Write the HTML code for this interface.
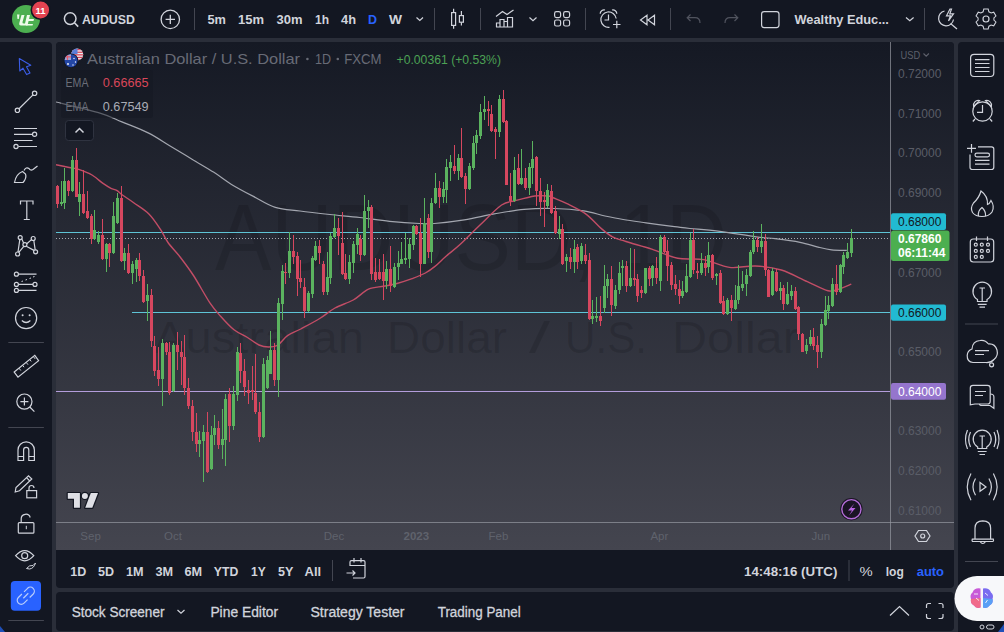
<!DOCTYPE html>
<html><head><meta charset="utf-8">
<style>
html,body{margin:0;padding:0;width:1004px;height:632px;overflow:hidden;background:#2a2e39;font-family:"Liberation Sans",sans-serif;}
.abs{position:absolute;}
.panel{position:absolute;background:#131722;border-radius:4px;}
svg{position:absolute;left:0;top:0;}
text{font-family:"Liberation Sans",sans-serif;}
</style></head><body>
<!-- top bar -->
<div class="abs" style="left:0;top:0;width:1004px;height:38px;background:#131722;"></div>
<!-- left toolbar -->
<div class="panel" style="left:0;top:42px;width:52px;height:600px;border-radius:0 4px 0 0;"></div>
<!-- right toolbar -->
<div class="panel" style="left:958px;top:42px;width:46px;height:600px;border-radius:4px 0 0 0;"></div>
<!-- chart panel -->
<div class="panel" style="left:56px;top:42px;width:898px;height:546px;overflow:hidden;">
  <div class="abs" style="left:0;top:0;width:898px;height:508px;background:linear-gradient(#151924,#44454f);"></div>
</div>
<!-- bottom panel -->
<div class="panel" style="left:56px;top:592px;width:898px;height:39px;"></div>

<svg width="1004" height="632" viewBox="0 0 1004 632">
  <defs>
    <clipPath id="cc"><rect x="56" y="42" width="834" height="480"/></clipPath>
  </defs>
  <!-- watermark -->
  <g clip-path="url(#cc)">
    <text x="215" y="269.5" font-size="94" fill="#000" fill-opacity="0.13" textLength="512" lengthAdjust="spacingAndGlyphs">AUDUSD, 1D</text>
    <g font-size="44.6" fill="#000" fill-opacity="0.13">
      <text x="154" y="353" textLength="210" lengthAdjust="spacingAndGlyphs">Australian</text>
      <text x="387" y="353" textLength="120" lengthAdjust="spacingAndGlyphs">Dollar</text>
      <text x="529" y="353" textLength="21" lengthAdjust="spacingAndGlyphs">/</text>
      <text x="565" y="353" textLength="82" lengthAdjust="spacingAndGlyphs">U.S.</text>
      <text x="672" y="353" textLength="127" lengthAdjust="spacingAndGlyphs">Dollar</text>
    </g>
    <!-- horizontal lines -->
    <rect x="56" y="232" width="834" height="1" fill="#5ec4d6"/>
    <line x1="56" y1="238.5" x2="890" y2="238.5" stroke="#a7aab2" stroke-width="1" stroke-dasharray="1,2"/>
    <rect x="132" y="312" width="758" height="1" fill="#5ec4d6"/>
    <rect x="56" y="391" width="834" height="1" fill="#b39ddb"/>
    <path d="M56.0 102.0 C63.3 103.8 89.0 109.8 100.0 113.1 C111.0 116.4 113.9 118.6 121.9 121.9 C129.9 125.2 140.2 128.9 148.2 132.9 C156.2 136.9 162.8 141.6 170.1 146.0 C177.4 150.4 184.7 154.8 192.0 159.2 C199.3 163.6 207.3 168.1 213.9 172.3 C220.5 176.5 224.9 180.4 231.5 184.4 C238.1 188.4 246.1 192.6 253.4 196.4 C260.7 200.2 267.5 205.0 275.3 207.4 C283.1 209.8 290.9 209.8 300.0 211.0 C309.1 212.2 319.9 213.4 329.9 214.5 C339.9 215.6 349.9 216.3 359.8 217.5 C369.8 218.7 379.7 220.4 389.6 221.4 C399.6 222.4 412.0 223.2 419.5 223.5 C427.0 223.8 426.9 224.1 434.4 223.5 C441.9 222.9 454.3 221.5 464.3 219.9 C474.3 218.3 484.2 215.7 494.2 213.9 C504.2 212.2 514.1 210.3 524.1 209.4 C534.1 208.5 544.0 208.2 554.0 208.5 C564.0 208.8 575.3 209.7 583.8 210.9 C592.3 212.2 598.4 214.6 605.0 216.0 C611.6 217.4 616.4 218.4 623.2 219.5 C630.0 220.6 637.5 221.6 646.0 222.8 C654.5 224.0 667.1 225.7 674.4 226.6 C681.7 227.5 682.7 227.8 690.0 228.5 C697.3 229.2 707.0 229.7 718.0 231.1 C729.0 232.5 746.5 235.5 756.0 236.8 C765.5 238.1 767.7 237.8 775.0 238.7 C782.3 239.6 792.7 240.9 800.0 242.3 C807.3 243.7 813.7 246.1 819.0 247.3 C824.3 248.6 827.0 249.3 831.6 249.8 C836.2 250.3 844.3 250.3 846.8 250.4" fill="none" stroke="#a3a6af" stroke-width="1.2"/>
    <path d="M56.0 164.7 C58.2 165.2 65.4 166.7 69.2 167.5 C73.0 168.3 74.9 168.2 78.7 169.4 C82.5 170.7 87.9 172.6 92.0 175.0 C96.1 177.4 100.2 181.5 103.4 183.7 C106.6 185.9 108.8 187.3 111.0 188.4 C113.2 189.5 114.8 189.2 116.7 190.3 C118.6 191.4 119.6 192.9 122.4 195.0 C125.2 197.1 129.3 199.5 133.7 202.7 C138.1 205.9 144.5 209.6 148.9 214.0 C153.3 218.4 157.1 224.4 160.3 229.2 C163.5 233.9 164.7 237.8 168.0 242.5 C171.3 247.2 176.0 251.6 180.3 257.2 C184.6 262.8 188.9 268.4 193.8 276.0 C198.7 283.6 205.4 296.2 209.9 302.9 C214.4 309.6 216.6 311.8 220.6 316.3 C224.6 320.8 229.5 326.3 234.0 329.8 C238.5 333.3 243.3 335.0 247.5 337.5 C251.7 340.0 255.5 343.4 259.0 345.0 C262.5 346.6 265.3 347.0 268.5 347.0 C271.7 347.0 274.8 346.9 278.0 345.0 C281.2 343.1 283.7 338.3 287.5 335.6 C291.3 332.9 295.4 331.9 300.8 329.0 C306.2 326.1 314.0 322.0 319.7 318.5 C325.4 315.0 329.4 311.1 335.0 308.0 C340.6 304.9 347.7 303.1 353.3 300.0 C358.9 296.9 363.4 291.5 368.5 289.2 C373.6 286.9 378.9 287.2 383.7 286.3 C388.4 285.4 392.3 284.8 397.0 283.5 C401.7 282.2 407.4 280.4 412.1 278.7 C416.8 276.9 421.6 275.1 425.4 273.0 C429.2 270.9 431.5 269.2 435.0 266.4 C438.5 263.6 442.1 259.6 446.3 256.0 C450.5 252.4 454.4 249.8 460.0 244.6 C465.6 239.4 473.1 231.6 480.0 225.0 C486.9 218.4 495.8 209.0 501.6 205.0 C507.4 201.0 509.5 202.3 515.0 200.8 C520.5 199.3 529.2 196.8 534.7 196.0 C540.2 195.2 544.8 195.7 548.0 196.0 C551.2 196.3 550.5 196.7 553.7 198.0 C556.9 199.3 561.6 201.0 567.0 203.7 C572.4 206.4 580.3 210.0 586.0 214.1 C591.7 218.2 596.7 224.6 601.1 228.4 C605.5 232.2 608.4 234.7 612.5 236.9 C616.6 239.1 619.4 239.4 625.9 241.5 C632.4 243.6 643.2 246.4 651.8 249.2 C660.4 252.0 669.1 256.6 677.7 258.3 C686.3 260.0 695.0 258.1 703.6 259.6 C712.2 261.1 720.9 266.3 729.5 267.4 C738.1 268.5 746.8 265.6 755.4 266.0 C764.0 266.4 772.6 267.4 781.3 270.0 C789.9 272.6 799.5 278.2 807.3 281.6 C815.1 285.1 822.8 289.4 828.0 290.7 C833.2 292.0 834.4 290.5 838.3 289.4 C842.2 288.3 849.1 285.1 851.3 284.2" fill="none" stroke="#c24d66" stroke-width="1.4"/>
    <rect x="57" y="185" width="1" height="23" fill="#d6475f"/><rect x="56" y="186" width="3" height="18" fill="#d6475f"/><rect x="61" y="181" width="1" height="25" fill="#5bb35f"/><rect x="60" y="202" width="3" height="2" fill="#5bb35f"/><rect x="64" y="168" width="1" height="41" fill="#5bb35f"/><rect x="63" y="181" width="3" height="22" fill="#5bb35f"/><rect x="68" y="180" width="1" height="16" fill="#d6475f"/><rect x="67" y="181" width="3" height="10" fill="#d6475f"/><rect x="72" y="156" width="1" height="36" fill="#5bb35f"/><rect x="71" y="160" width="3" height="31" fill="#5bb35f"/><rect x="76" y="148" width="1" height="49" fill="#d6475f"/><rect x="75" y="160" width="3" height="37" fill="#d6475f"/><rect x="79" y="182" width="1" height="34" fill="#5bb35f"/><rect x="78" y="194" width="3" height="8" fill="#5bb35f"/><rect x="83" y="170" width="1" height="44" fill="#d6475f"/><rect x="82" y="194" width="3" height="19" fill="#d6475f"/><rect x="87" y="191" width="1" height="28" fill="#d6475f"/><rect x="86" y="211" width="3" height="7" fill="#d6475f"/><rect x="91" y="214" width="1" height="30" fill="#d6475f"/><rect x="90" y="216" width="3" height="23" fill="#d6475f"/><rect x="94" y="210" width="1" height="30" fill="#5bb35f"/><rect x="93" y="230" width="3" height="9" fill="#5bb35f"/><rect x="98" y="231" width="1" height="13" fill="#5bb35f"/><rect x="97" y="235" width="3" height="7" fill="#5bb35f"/><rect x="102" y="219" width="1" height="41" fill="#d6475f"/><rect x="101" y="235" width="3" height="24" fill="#d6475f"/><rect x="106" y="243" width="1" height="29" fill="#5bb35f"/><rect x="105" y="244" width="3" height="15" fill="#5bb35f"/><rect x="109" y="243" width="1" height="24" fill="#d6475f"/><rect x="108" y="244" width="3" height="9" fill="#d6475f"/><rect x="113" y="202" width="1" height="52" fill="#5bb35f"/><rect x="112" y="216" width="3" height="37" fill="#5bb35f"/><rect x="117" y="193" width="1" height="31" fill="#5bb35f"/><rect x="116" y="198" width="3" height="25" fill="#5bb35f"/><rect x="121" y="186" width="1" height="76" fill="#d6475f"/><rect x="120" y="198" width="3" height="63" fill="#d6475f"/><rect x="124" y="248" width="1" height="22" fill="#5bb35f"/><rect x="123" y="253" width="3" height="8" fill="#5bb35f"/><rect x="128" y="244" width="1" height="30" fill="#d6475f"/><rect x="127" y="253" width="3" height="20" fill="#d6475f"/><rect x="132" y="261" width="1" height="23" fill="#5bb35f"/><rect x="131" y="264" width="3" height="9" fill="#5bb35f"/><rect x="136" y="258" width="1" height="24" fill="#5bb35f"/><rect x="135" y="260" width="3" height="9" fill="#5bb35f"/><rect x="139" y="253" width="1" height="28" fill="#d6475f"/><rect x="138" y="260" width="3" height="16" fill="#d6475f"/><rect x="143" y="270" width="1" height="33" fill="#d6475f"/><rect x="142" y="276" width="3" height="26" fill="#d6475f"/><rect x="147" y="284" width="1" height="37" fill="#5bb35f"/><rect x="146" y="295" width="3" height="6" fill="#5bb35f"/><rect x="151" y="289" width="1" height="58" fill="#d6475f"/><rect x="150" y="295" width="3" height="46" fill="#d6475f"/><rect x="154" y="336" width="1" height="40" fill="#d6475f"/><rect x="153" y="346" width="3" height="25" fill="#d6475f"/><rect x="158" y="347" width="1" height="39" fill="#d6475f"/><rect x="157" y="370" width="3" height="9" fill="#d6475f"/><rect x="162" y="339" width="1" height="67" fill="#5bb35f"/><rect x="161" y="343" width="3" height="36" fill="#5bb35f"/><rect x="166" y="342" width="1" height="13" fill="#d6475f"/><rect x="165" y="343" width="3" height="9" fill="#d6475f"/><rect x="169" y="342" width="1" height="53" fill="#d6475f"/><rect x="168" y="352" width="3" height="41" fill="#d6475f"/><rect x="173" y="343" width="1" height="49" fill="#5bb35f"/><rect x="172" y="345" width="3" height="46" fill="#5bb35f"/><rect x="177" y="332" width="1" height="38" fill="#d6475f"/><rect x="176" y="345" width="3" height="7" fill="#d6475f"/><rect x="181" y="341" width="1" height="44" fill="#d6475f"/><rect x="180" y="352" width="3" height="5" fill="#d6475f"/><rect x="184" y="335" width="1" height="60" fill="#d6475f"/><rect x="183" y="357" width="3" height="31" fill="#d6475f"/><rect x="188" y="378" width="1" height="31" fill="#d6475f"/><rect x="187" y="388" width="3" height="18" fill="#d6475f"/><rect x="192" y="400" width="1" height="41" fill="#d6475f"/><rect x="191" y="406" width="3" height="26" fill="#d6475f"/><rect x="196" y="413" width="1" height="39" fill="#d6475f"/><rect x="195" y="432" width="3" height="12" fill="#d6475f"/><rect x="199" y="431" width="1" height="26" fill="#5bb35f"/><rect x="198" y="440" width="3" height="4" fill="#5bb35f"/><rect x="203" y="425" width="1" height="57" fill="#5bb35f"/><rect x="202" y="432" width="3" height="9" fill="#5bb35f"/><rect x="207" y="412" width="1" height="61" fill="#d6475f"/><rect x="206" y="432" width="3" height="40" fill="#d6475f"/><rect x="211" y="426" width="1" height="44" fill="#5bb35f"/><rect x="210" y="435" width="3" height="34" fill="#5bb35f"/><rect x="214" y="415" width="1" height="30" fill="#5bb35f"/><rect x="213" y="428" width="3" height="7" fill="#5bb35f"/><rect x="218" y="421" width="1" height="28" fill="#d6475f"/><rect x="217" y="428" width="3" height="17" fill="#d6475f"/><rect x="222" y="409" width="1" height="50" fill="#5bb35f"/><rect x="221" y="439" width="3" height="6" fill="#5bb35f"/><rect x="225" y="394" width="1" height="72" fill="#5bb35f"/><rect x="224" y="399" width="3" height="41" fill="#5bb35f"/><rect x="229" y="388" width="1" height="54" fill="#d6475f"/><rect x="228" y="394" width="3" height="32" fill="#d6475f"/><rect x="233" y="386" width="1" height="44" fill="#5bb35f"/><rect x="232" y="394" width="3" height="32" fill="#5bb35f"/><rect x="237" y="347" width="1" height="54" fill="#5bb35f"/><rect x="236" y="352" width="3" height="43" fill="#5bb35f"/><rect x="240" y="343" width="1" height="40" fill="#d6475f"/><rect x="239" y="353" width="3" height="18" fill="#d6475f"/><rect x="244" y="359" width="1" height="37" fill="#d6475f"/><rect x="243" y="371" width="3" height="16" fill="#d6475f"/><rect x="248" y="380" width="1" height="24" fill="#d6475f"/><rect x="247" y="390" width="3" height="3" fill="#d6475f"/><rect x="252" y="366" width="1" height="34" fill="#d6475f"/><rect x="251" y="390" width="3" height="2" fill="#d6475f"/><rect x="255" y="354" width="1" height="60" fill="#d6475f"/><rect x="254" y="393" width="3" height="19" fill="#d6475f"/><rect x="259" y="402" width="1" height="40" fill="#d6475f"/><rect x="258" y="412" width="3" height="25" fill="#d6475f"/><rect x="263" y="358" width="1" height="80" fill="#5bb35f"/><rect x="262" y="364" width="3" height="73" fill="#5bb35f"/><rect x="267" y="356" width="1" height="33" fill="#5bb35f"/><rect x="266" y="360" width="3" height="28" fill="#5bb35f"/><rect x="270" y="331" width="1" height="43" fill="#5bb35f"/><rect x="269" y="350" width="3" height="24" fill="#5bb35f"/><rect x="274" y="343" width="1" height="43" fill="#d6475f"/><rect x="273" y="350" width="3" height="30" fill="#d6475f"/><rect x="278" y="298" width="1" height="99" fill="#5bb35f"/><rect x="277" y="303" width="3" height="77" fill="#5bb35f"/><rect x="282" y="265" width="1" height="55" fill="#5bb35f"/><rect x="281" y="271" width="3" height="33" fill="#5bb35f"/><rect x="285" y="263" width="1" height="21" fill="#d6475f"/><rect x="284" y="272" width="3" height="1" fill="#d6475f"/><rect x="289" y="232" width="1" height="46" fill="#5bb35f"/><rect x="288" y="251" width="3" height="22" fill="#5bb35f"/><rect x="293" y="235" width="1" height="29" fill="#d6475f"/><rect x="292" y="251" width="3" height="6" fill="#d6475f"/><rect x="297" y="252" width="1" height="44" fill="#d6475f"/><rect x="296" y="256" width="3" height="23" fill="#d6475f"/><rect x="300" y="260" width="1" height="28" fill="#d6475f"/><rect x="299" y="278" width="3" height="4" fill="#d6475f"/><rect x="304" y="278" width="1" height="40" fill="#d6475f"/><rect x="303" y="287" width="3" height="24" fill="#d6475f"/><rect x="308" y="291" width="1" height="21" fill="#5bb35f"/><rect x="307" y="293" width="3" height="18" fill="#5bb35f"/><rect x="312" y="256" width="1" height="42" fill="#5bb35f"/><rect x="311" y="258" width="3" height="36" fill="#5bb35f"/><rect x="315" y="241" width="1" height="20" fill="#5bb35f"/><rect x="314" y="246" width="3" height="14" fill="#5bb35f"/><rect x="319" y="240" width="1" height="24" fill="#d6475f"/><rect x="318" y="246" width="3" height="7" fill="#d6475f"/><rect x="323" y="261" width="1" height="34" fill="#d6475f"/><rect x="322" y="264" width="3" height="28" fill="#d6475f"/><rect x="327" y="252" width="1" height="43" fill="#5bb35f"/><rect x="326" y="277" width="3" height="15" fill="#5bb35f"/><rect x="330" y="233" width="1" height="51" fill="#5bb35f"/><rect x="329" y="236" width="3" height="42" fill="#5bb35f"/><rect x="334" y="214" width="1" height="24" fill="#5bb35f"/><rect x="333" y="228" width="3" height="9" fill="#5bb35f"/><rect x="338" y="218" width="1" height="37" fill="#d6475f"/><rect x="337" y="228" width="3" height="8" fill="#d6475f"/><rect x="342" y="212" width="1" height="63" fill="#d6475f"/><rect x="341" y="243" width="3" height="31" fill="#d6475f"/><rect x="345" y="254" width="1" height="26" fill="#d6475f"/><rect x="344" y="273" width="3" height="6" fill="#d6475f"/><rect x="349" y="255" width="1" height="29" fill="#5bb35f"/><rect x="348" y="262" width="3" height="17" fill="#5bb35f"/><rect x="353" y="241" width="1" height="32" fill="#5bb35f"/><rect x="352" y="244" width="3" height="19" fill="#5bb35f"/><rect x="357" y="228" width="1" height="26" fill="#5bb35f"/><rect x="356" y="234" width="3" height="11" fill="#5bb35f"/><rect x="360" y="235" width="1" height="26" fill="#d6475f"/><rect x="359" y="239" width="3" height="16" fill="#d6475f"/><rect x="364" y="195" width="1" height="61" fill="#5bb35f"/><rect x="363" y="211" width="3" height="44" fill="#5bb35f"/><rect x="368" y="200" width="1" height="28" fill="#5bb35f"/><rect x="367" y="207" width="3" height="4" fill="#5bb35f"/><rect x="371" y="205" width="1" height="75" fill="#d6475f"/><rect x="370" y="207" width="3" height="67" fill="#d6475f"/><rect x="375" y="258" width="1" height="24" fill="#d6475f"/><rect x="374" y="272" width="3" height="8" fill="#d6475f"/><rect x="379" y="259" width="1" height="21" fill="#d6475f"/><rect x="378" y="272" width="3" height="7" fill="#d6475f"/><rect x="383" y="254" width="1" height="46" fill="#d6475f"/><rect x="382" y="272" width="3" height="9" fill="#d6475f"/><rect x="386" y="261" width="1" height="28" fill="#5bb35f"/><rect x="385" y="269" width="3" height="12" fill="#5bb35f"/><rect x="390" y="246" width="1" height="46" fill="#d6475f"/><rect x="389" y="269" width="3" height="17" fill="#d6475f"/><rect x="394" y="263" width="1" height="25" fill="#5bb35f"/><rect x="393" y="267" width="3" height="20" fill="#5bb35f"/><rect x="398" y="251" width="1" height="29" fill="#5bb35f"/><rect x="397" y="263" width="3" height="4" fill="#5bb35f"/><rect x="401" y="242" width="1" height="22" fill="#5bb35f"/><rect x="400" y="259" width="3" height="5" fill="#5bb35f"/><rect x="405" y="233" width="1" height="31" fill="#5bb35f"/><rect x="404" y="258" width="3" height="2" fill="#5bb35f"/><rect x="409" y="238" width="1" height="30" fill="#5bb35f"/><rect x="408" y="244" width="3" height="15" fill="#5bb35f"/><rect x="413" y="225" width="1" height="25" fill="#5bb35f"/><rect x="412" y="226" width="3" height="19" fill="#5bb35f"/><rect x="416" y="225" width="1" height="10" fill="#d6475f"/><rect x="415" y="226" width="3" height="8" fill="#d6475f"/><rect x="420" y="218" width="1" height="59" fill="#d6475f"/><rect x="419" y="233" width="3" height="31" fill="#d6475f"/><rect x="424" y="198" width="1" height="66" fill="#5bb35f"/><rect x="423" y="223" width="3" height="41" fill="#5bb35f"/><rect x="428" y="214" width="1" height="44" fill="#d6475f"/><rect x="427" y="218" width="3" height="34" fill="#d6475f"/><rect x="431" y="198" width="1" height="65" fill="#5bb35f"/><rect x="430" y="203" width="3" height="49" fill="#5bb35f"/><rect x="435" y="173" width="1" height="31" fill="#5bb35f"/><rect x="434" y="188" width="3" height="15" fill="#5bb35f"/><rect x="439" y="181" width="1" height="27" fill="#d6475f"/><rect x="438" y="188" width="3" height="9" fill="#d6475f"/><rect x="443" y="182" width="1" height="21" fill="#5bb35f"/><rect x="442" y="189" width="3" height="8" fill="#5bb35f"/><rect x="446" y="159" width="1" height="44" fill="#5bb35f"/><rect x="445" y="167" width="3" height="23" fill="#5bb35f"/><rect x="450" y="155" width="1" height="26" fill="#5bb35f"/><rect x="449" y="162" width="3" height="6" fill="#5bb35f"/><rect x="454" y="145" width="1" height="29" fill="#d6475f"/><rect x="453" y="166" width="3" height="5" fill="#d6475f"/><rect x="458" y="154" width="1" height="26" fill="#5bb35f"/><rect x="457" y="158" width="3" height="13" fill="#5bb35f"/><rect x="461" y="128" width="1" height="50" fill="#d6475f"/><rect x="460" y="158" width="3" height="19" fill="#d6475f"/><rect x="465" y="173" width="1" height="31" fill="#d6475f"/><rect x="464" y="176" width="3" height="13" fill="#d6475f"/><rect x="469" y="163" width="1" height="27" fill="#5bb35f"/><rect x="468" y="166" width="3" height="23" fill="#5bb35f"/><rect x="473" y="136" width="1" height="34" fill="#5bb35f"/><rect x="472" y="143" width="3" height="25" fill="#5bb35f"/><rect x="476" y="130" width="1" height="24" fill="#5bb35f"/><rect x="475" y="135" width="3" height="8" fill="#5bb35f"/><rect x="480" y="104" width="1" height="35" fill="#5bb35f"/><rect x="479" y="112" width="3" height="24" fill="#5bb35f"/><rect x="484" y="96" width="1" height="24" fill="#5bb35f"/><rect x="483" y="109" width="3" height="3" fill="#5bb35f"/><rect x="488" y="101" width="1" height="25" fill="#d6475f"/><rect x="487" y="109" width="3" height="2" fill="#d6475f"/><rect x="491" y="105" width="1" height="27" fill="#d6475f"/><rect x="490" y="114" width="3" height="17" fill="#d6475f"/><rect x="495" y="127" width="1" height="32" fill="#d6475f"/><rect x="494" y="129" width="3" height="3" fill="#d6475f"/><rect x="499" y="95" width="1" height="42" fill="#5bb35f"/><rect x="498" y="99" width="3" height="33" fill="#5bb35f"/><rect x="503" y="90" width="1" height="33" fill="#d6475f"/><rect x="502" y="99" width="3" height="23" fill="#d6475f"/><rect x="506" y="120" width="1" height="65" fill="#d6475f"/><rect x="505" y="121" width="3" height="64" fill="#d6475f"/><rect x="510" y="173" width="1" height="33" fill="#d6475f"/><rect x="509" y="196" width="3" height="5" fill="#d6475f"/><rect x="514" y="157" width="1" height="45" fill="#5bb35f"/><rect x="513" y="170" width="3" height="31" fill="#5bb35f"/><rect x="518" y="154" width="1" height="31" fill="#d6475f"/><rect x="517" y="168" width="3" height="16" fill="#d6475f"/><rect x="521" y="149" width="1" height="36" fill="#5bb35f"/><rect x="520" y="178" width="3" height="6" fill="#5bb35f"/><rect x="525" y="168" width="1" height="22" fill="#d6475f"/><rect x="524" y="178" width="3" height="10" fill="#d6475f"/><rect x="529" y="163" width="1" height="32" fill="#5bb35f"/><rect x="528" y="167" width="3" height="21" fill="#5bb35f"/><rect x="532" y="141" width="1" height="43" fill="#5bb35f"/><rect x="531" y="159" width="3" height="9" fill="#5bb35f"/><rect x="536" y="156" width="1" height="50" fill="#d6475f"/><rect x="535" y="157" width="3" height="34" fill="#d6475f"/><rect x="540" y="178" width="1" height="38" fill="#d6475f"/><rect x="539" y="191" width="3" height="11" fill="#d6475f"/><rect x="544" y="192" width="1" height="35" fill="#d6475f"/><rect x="543" y="200" width="3" height="2" fill="#d6475f"/><rect x="547" y="184" width="1" height="24" fill="#5bb35f"/><rect x="546" y="190" width="3" height="16" fill="#5bb35f"/><rect x="551" y="185" width="1" height="29" fill="#d6475f"/><rect x="550" y="191" width="3" height="22" fill="#d6475f"/><rect x="555" y="206" width="1" height="28" fill="#d6475f"/><rect x="554" y="211" width="3" height="22" fill="#d6475f"/><rect x="559" y="216" width="1" height="23" fill="#5bb35f"/><rect x="558" y="229" width="3" height="5" fill="#5bb35f"/><rect x="562" y="224" width="1" height="41" fill="#d6475f"/><rect x="561" y="229" width="3" height="35" fill="#d6475f"/><rect x="566" y="254" width="1" height="18" fill="#5bb35f"/><rect x="565" y="257" width="3" height="4" fill="#5bb35f"/><rect x="570" y="248" width="1" height="21" fill="#d6475f"/><rect x="569" y="257" width="3" height="5" fill="#d6475f"/><rect x="574" y="240" width="1" height="33" fill="#5bb35f"/><rect x="573" y="249" width="3" height="13" fill="#5bb35f"/><rect x="577" y="244" width="1" height="25" fill="#d6475f"/><rect x="576" y="247" width="3" height="15" fill="#d6475f"/><rect x="581" y="243" width="1" height="21" fill="#5bb35f"/><rect x="580" y="246" width="3" height="15" fill="#5bb35f"/><rect x="585" y="244" width="1" height="20" fill="#d6475f"/><rect x="584" y="255" width="3" height="6" fill="#d6475f"/><rect x="589" y="253" width="1" height="67" fill="#d6475f"/><rect x="588" y="260" width="3" height="59" fill="#d6475f"/><rect x="592" y="300" width="1" height="24" fill="#5bb35f"/><rect x="591" y="316" width="3" height="3" fill="#5bb35f"/><rect x="596" y="297" width="1" height="25" fill="#5bb35f"/><rect x="595" y="316" width="3" height="2" fill="#5bb35f"/><rect x="600" y="296" width="1" height="30" fill="#d6475f"/><rect x="599" y="316" width="3" height="5" fill="#d6475f"/><rect x="604" y="265" width="1" height="48" fill="#5bb35f"/><rect x="603" y="286" width="3" height="22" fill="#5bb35f"/><rect x="607" y="274" width="1" height="24" fill="#5bb35f"/><rect x="606" y="279" width="3" height="7" fill="#5bb35f"/><rect x="611" y="266" width="1" height="50" fill="#d6475f"/><rect x="610" y="279" width="3" height="26" fill="#d6475f"/><rect x="615" y="285" width="1" height="24" fill="#5bb35f"/><rect x="614" y="290" width="3" height="16" fill="#5bb35f"/><rect x="619" y="262" width="1" height="32" fill="#5bb35f"/><rect x="618" y="273" width="3" height="17" fill="#5bb35f"/><rect x="622" y="260" width="1" height="26" fill="#5bb35f"/><rect x="621" y="266" width="3" height="2" fill="#5bb35f"/><rect x="626" y="261" width="1" height="31" fill="#d6475f"/><rect x="625" y="266" width="3" height="20" fill="#d6475f"/><rect x="630" y="248" width="1" height="39" fill="#5bb35f"/><rect x="629" y="278" width="3" height="8" fill="#5bb35f"/><rect x="634" y="249" width="1" height="37" fill="#d6475f"/><rect x="633" y="278" width="3" height="2" fill="#d6475f"/><rect x="637" y="274" width="1" height="28" fill="#d6475f"/><rect x="636" y="279" width="3" height="17" fill="#d6475f"/><rect x="641" y="286" width="1" height="12" fill="#d6475f"/><rect x="640" y="290" width="3" height="3" fill="#d6475f"/><rect x="645" y="268" width="1" height="26" fill="#5bb35f"/><rect x="644" y="268" width="3" height="25" fill="#5bb35f"/><rect x="649" y="266" width="1" height="20" fill="#d6475f"/><rect x="648" y="268" width="3" height="11" fill="#d6475f"/><rect x="652" y="265" width="1" height="21" fill="#5bb35f"/><rect x="651" y="266" width="3" height="12" fill="#5bb35f"/><rect x="656" y="257" width="1" height="27" fill="#d6475f"/><rect x="655" y="268" width="3" height="10" fill="#d6475f"/><rect x="660" y="235" width="1" height="56" fill="#5bb35f"/><rect x="659" y="237" width="3" height="44" fill="#5bb35f"/><rect x="664" y="235" width="1" height="18" fill="#d6475f"/><rect x="663" y="237" width="3" height="15" fill="#d6475f"/><rect x="667" y="240" width="1" height="41" fill="#d6475f"/><rect x="666" y="251" width="3" height="15" fill="#d6475f"/><rect x="671" y="262" width="1" height="28" fill="#d6475f"/><rect x="670" y="265" width="3" height="20" fill="#d6475f"/><rect x="675" y="275" width="1" height="20" fill="#d6475f"/><rect x="674" y="284" width="3" height="5" fill="#d6475f"/><rect x="679" y="280" width="1" height="24" fill="#d6475f"/><rect x="678" y="289" width="3" height="7" fill="#d6475f"/><rect x="682" y="281" width="1" height="17" fill="#5bb35f"/><rect x="681" y="291" width="3" height="5" fill="#5bb35f"/><rect x="686" y="264" width="1" height="29" fill="#5bb35f"/><rect x="685" y="276" width="3" height="16" fill="#5bb35f"/><rect x="690" y="233" width="1" height="45" fill="#5bb35f"/><rect x="689" y="240" width="3" height="37" fill="#5bb35f"/><rect x="693" y="229" width="1" height="45" fill="#d6475f"/><rect x="692" y="240" width="3" height="30" fill="#d6475f"/><rect x="697" y="263" width="1" height="16" fill="#d6475f"/><rect x="696" y="271" width="3" height="2" fill="#d6475f"/><rect x="701" y="253" width="1" height="22" fill="#5bb35f"/><rect x="700" y="263" width="3" height="10" fill="#5bb35f"/><rect x="705" y="256" width="1" height="20" fill="#d6475f"/><rect x="704" y="263" width="3" height="5" fill="#d6475f"/><rect x="708" y="242" width="1" height="31" fill="#5bb35f"/><rect x="707" y="255" width="3" height="12" fill="#5bb35f"/><rect x="712" y="254" width="1" height="26" fill="#d6475f"/><rect x="711" y="255" width="3" height="23" fill="#d6475f"/><rect x="716" y="273" width="1" height="12" fill="#5bb35f"/><rect x="715" y="274" width="3" height="2" fill="#5bb35f"/><rect x="720" y="270" width="1" height="34" fill="#d6475f"/><rect x="719" y="273" width="3" height="30" fill="#d6475f"/><rect x="723" y="296" width="1" height="19" fill="#d6475f"/><rect x="722" y="301" width="3" height="13" fill="#d6475f"/><rect x="727" y="298" width="1" height="17" fill="#5bb35f"/><rect x="726" y="300" width="3" height="14" fill="#5bb35f"/><rect x="731" y="295" width="1" height="26" fill="#d6475f"/><rect x="730" y="300" width="3" height="8" fill="#d6475f"/><rect x="735" y="285" width="1" height="25" fill="#5bb35f"/><rect x="734" y="300" width="3" height="9" fill="#5bb35f"/><rect x="738" y="265" width="1" height="39" fill="#5bb35f"/><rect x="737" y="286" width="3" height="14" fill="#5bb35f"/><rect x="742" y="271" width="1" height="20" fill="#5bb35f"/><rect x="741" y="284" width="3" height="4" fill="#5bb35f"/><rect x="746" y="269" width="1" height="27" fill="#5bb35f"/><rect x="745" y="275" width="3" height="9" fill="#5bb35f"/><rect x="750" y="250" width="1" height="27" fill="#5bb35f"/><rect x="749" y="252" width="3" height="24" fill="#5bb35f"/><rect x="753" y="231" width="1" height="23" fill="#5bb35f"/><rect x="752" y="240" width="3" height="12" fill="#5bb35f"/><rect x="757" y="237" width="1" height="15" fill="#d6475f"/><rect x="756" y="240" width="3" height="7" fill="#d6475f"/><rect x="761" y="224" width="1" height="29" fill="#5bb35f"/><rect x="760" y="241" width="3" height="6" fill="#5bb35f"/><rect x="765" y="234" width="1" height="42" fill="#d6475f"/><rect x="764" y="241" width="3" height="29" fill="#d6475f"/><rect x="768" y="269" width="1" height="28" fill="#d6475f"/><rect x="767" y="270" width="3" height="27" fill="#d6475f"/><rect x="772" y="268" width="1" height="28" fill="#5bb35f"/><rect x="771" y="271" width="3" height="24" fill="#5bb35f"/><rect x="776" y="269" width="1" height="23" fill="#d6475f"/><rect x="775" y="272" width="3" height="19" fill="#d6475f"/><rect x="780" y="282" width="1" height="18" fill="#5bb35f"/><rect x="779" y="288" width="3" height="3" fill="#5bb35f"/><rect x="783" y="285" width="1" height="25" fill="#d6475f"/><rect x="782" y="288" width="3" height="16" fill="#d6475f"/><rect x="787" y="282" width="1" height="23" fill="#5bb35f"/><rect x="786" y="294" width="3" height="10" fill="#5bb35f"/><rect x="791" y="285" width="1" height="15" fill="#5bb35f"/><rect x="790" y="291" width="3" height="5" fill="#5bb35f"/><rect x="795" y="287" width="1" height="23" fill="#d6475f"/><rect x="794" y="291" width="3" height="18" fill="#d6475f"/><rect x="798" y="306" width="1" height="34" fill="#d6475f"/><rect x="797" y="307" width="3" height="27" fill="#d6475f"/><rect x="802" y="333" width="1" height="19" fill="#d6475f"/><rect x="801" y="334" width="3" height="18" fill="#d6475f"/><rect x="806" y="339" width="1" height="15" fill="#5bb35f"/><rect x="805" y="345" width="3" height="6" fill="#5bb35f"/><rect x="810" y="330" width="1" height="16" fill="#5bb35f"/><rect x="809" y="337" width="3" height="7" fill="#5bb35f"/><rect x="813" y="328" width="1" height="22" fill="#d6475f"/><rect x="812" y="337" width="3" height="9" fill="#d6475f"/><rect x="817" y="336" width="1" height="32" fill="#d6475f"/><rect x="816" y="345" width="3" height="7" fill="#d6475f"/><rect x="821" y="319" width="1" height="39" fill="#5bb35f"/><rect x="820" y="324" width="3" height="28" fill="#5bb35f"/><rect x="825" y="296" width="1" height="30" fill="#5bb35f"/><rect x="824" y="310" width="3" height="15" fill="#5bb35f"/><rect x="828" y="296" width="1" height="23" fill="#5bb35f"/><rect x="827" y="305" width="3" height="6" fill="#5bb35f"/><rect x="832" y="278" width="1" height="29" fill="#5bb35f"/><rect x="831" y="284" width="3" height="22" fill="#5bb35f"/><rect x="836" y="265" width="1" height="30" fill="#d6475f"/><rect x="835" y="284" width="3" height="8" fill="#d6475f"/><rect x="840" y="264" width="1" height="29" fill="#5bb35f"/><rect x="839" y="265" width="3" height="27" fill="#5bb35f"/><rect x="843" y="252" width="1" height="22" fill="#5bb35f"/><rect x="842" y="255" width="3" height="12" fill="#5bb35f"/><rect x="847" y="243" width="1" height="16" fill="#5bb35f"/><rect x="846" y="252" width="3" height="6" fill="#5bb35f"/><rect x="851" y="229" width="1" height="28" fill="#5bb35f"/><rect x="850" y="238" width="3" height="15" fill="#5bb35f"/>
  </g>
  <!-- axis lines -->
  <rect x="890" y="42" width="1" height="508" fill="#9598a1" fill-opacity="0.7"/>
  <rect x="56" y="522" width="898" height="1" fill="#9598a1" fill-opacity="0.7"/>


  <!-- ===== top bar ===== -->
  <circle cx="26" cy="19" r="14" fill="#4caf50"/>
  <g fill="#eefbea">
    <path d="M17 14.5 L19.5 14.5 L18.8 19 L17.5 19 Z"/>
    <path d="M21.5 15 L24.5 15 L22.5 22 Q22.2 23.5 23.8 23.5 L25 23.5 L27 15 L30 15 L27.5 25.5 L21 25.5 Q18.8 25.5 19.3 23 Z"/>
    <path d="M28 19 L34 19 L33.5 21 L27.5 21 Z"/>
    <path d="M26.5 24 L33 24 L32.5 25.5 L26 25.5 Z"/>
  </g>
  <circle cx="40.6" cy="10" r="9.3" fill="#e34351" stroke="#131722" stroke-width="1.6"/>
  <text x="40.6" y="13.6" font-size="9.5" font-weight="bold" fill="#fff" text-anchor="middle">11</text>
  <circle cx="70.2" cy="18.6" r="5.8" fill="none" stroke="#d1d4dc" stroke-width="1.5"/>
  <path d="M74.4 22.8 L78.2 26.6" stroke="#d1d4dc" stroke-width="1.6"/>
  <text x="82.1" y="24" font-size="12.8" font-weight="bold" fill="#d1d4dc" textLength="52.8" lengthAdjust="spacingAndGlyphs">AUDUSD</text>
  <circle cx="170.3" cy="19.4" r="9.2" fill="none" stroke="#d1d4dc" stroke-width="1.3"/>
  <path d="M165.6 19.4 H175 M170.3 14.7 V24.1" stroke="#d1d4dc" stroke-width="1.3"/>
  <rect x="194" y="8" width="1" height="22" fill="#434651"/>
  <g font-size="13" font-weight="bold" fill="#d1d4dc">
    <text x="207.5" y="24" textLength="18.5" lengthAdjust="spacingAndGlyphs">5m</text>
    <text x="238" y="24" textLength="26" lengthAdjust="spacingAndGlyphs">15m</text>
    <text x="276.5" y="24" textLength="26" lengthAdjust="spacingAndGlyphs">30m</text>
    <text x="315" y="24" textLength="14" lengthAdjust="spacingAndGlyphs">1h</text>
    <text x="341" y="24" textLength="15" lengthAdjust="spacingAndGlyphs">4h</text>
    <text x="368" y="24" textLength="9" lengthAdjust="spacingAndGlyphs" fill="#2962ff">D</text>
    <text x="389" y="24" textLength="13" lengthAdjust="spacingAndGlyphs">W</text>
  </g>
  <path d="M416.5 17.5 L419.8 20.5 L423 17.5" fill="none" stroke="#d1d4dc" stroke-width="1.2"/>
  <rect x="434" y="8" width="1" height="22" fill="#434651"/>
  <!-- candles icon -->
  <g fill="none" stroke="#d1d4dc" stroke-width="1.2">
    <rect x="451.6" y="12.6" width="4" height="12.8"/>
    <path d="M453.6 8.8 V12.6 M453.6 25.4 V28.7"/>
    <rect x="459.4" y="15.6" width="4" height="6.6"/>
    <path d="M461.4 11 V15.6 M461.4 22.2 V25.5"/>
  </g>
  <rect x="480" y="8" width="1" height="22" fill="#434651"/>
  <!-- indicators icon -->
  <g fill="none" stroke="#d1d4dc" stroke-width="1.2">
    <path d="M496 16.5 L502.5 11.5 L507 14.5 L513.5 10"/>
    <path d="M496.5 27 V23 H500 V27 M500 27 V19.5 H504 V27 M504 27 V21.5 H507.5 V27 M507.5 27 V17.5 H512.5 V27 H496"/>
  </g>
  <path d="M529.5 17.5 L533 20.8 L536.5 17.5" fill="none" stroke="#d1d4dc" stroke-width="1.2"/>
  <!-- layout icon -->
  <g fill="none" stroke="#d1d4dc" stroke-width="1.2">
    <rect x="554.6" y="11.6" width="6" height="6" rx="1.8"/>
    <rect x="563.6" y="11.6" width="6" height="6" rx="1.8"/>
    <rect x="554.6" y="20" width="6" height="6" rx="1.8"/>
    <rect x="563.6" y="20" width="6" height="6" rx="1.8"/>
  </g>
  <rect x="585" y="8" width="1" height="22" fill="#434651"/>
  <!-- alert icon -->
  <g fill="none" stroke="#d1d4dc" stroke-width="1.2">
    <path d="M616.2 18.5 A7.7 7.7 0 1 0 609.5 27.3"/>
    <path d="M600.2 13.8 A3.8 3.8 0 0 1 605 10 M612 10 A3.8 3.8 0 0 1 616.8 13.8"/>
    <path d="M608.5 14.5 V20 H604.5"/>
    <path d="M613 24.5 H620.5 M616.8 20.8 V28.2"/>
  </g>
  <!-- replay icon -->
  <g fill="none" stroke="#d1d4dc" stroke-width="1.2">
    <path d="M647 15.2 L640.5 20 L647 24.8 Z M654.5 15.2 L648 20 L654.5 24.8 Z"/>
  </g>
  <rect x="670" y="8" width="1" height="22" fill="#434651"/>
  <g fill="none" stroke="#50535e" stroke-width="1.2">
    <path d="M690.5 14.5 L687.2 17.7 L690.5 21 M687.2 17.7 H695 Q700 17.7 700 23"/>
    <path d="M734.5 14.5 L737.8 17.7 L734.5 21 M737.8 17.7 H730 Q725 17.7 725 23"/>
  </g>
  <rect x="761.6" y="11.6" width="17.4" height="16" rx="2.5" fill="none" stroke="#d1d4dc" stroke-width="1.2"/>
  <text x="794.5" y="24" font-size="13.5" font-weight="bold" fill="#d1d4dc" textLength="94.4" lengthAdjust="spacingAndGlyphs">Wealthy Educ...</text>
  <path d="M906 17.5 L909.8 20.8 L913.6 17.5" fill="none" stroke="#d1d4dc" stroke-width="1.2"/>
  <rect x="924" y="8" width="1" height="22" fill="#434651"/>
  <!-- lightning search -->
  <g fill="none" stroke="#d1d4dc" stroke-width="1.2">
    <path d="M944.5 11 A7.5 7.5 0 1 0 953.5 19.5"/>
    <path d="M950.5 23.5 L957 29"/>
    <path d="M950 9 L946.5 15.8 L950.5 15.8 L948.5 21 L953.5 13.8 L949.8 13.8 L951.5 9 Z"/>
  </g>
  <!-- gear -->
  <g fill="none" stroke="#d1d4dc" stroke-width="1.2">
    <path d="M983.5 9.2 H988.5 L989.3 12.3 L991.8 13.7 L994.8 12.8 L997.3 17.1 L995 19.3 L995 21.7 L997.3 23.9 L994.8 28.2 L991.8 27.3 L989.3 28.7 L988.5 31.8 H983.5 L982.7 28.7 L980.2 27.3 L977.2 28.2 L974.7 23.9 L977 21.7 L977 19.3 L974.7 17.1 L977.2 12.8 L980.2 13.7 L982.7 12.3 Z" transform="translate(986,19) scale(0.88) translate(-986,-20.5)"/>
    <circle cx="986" cy="19" r="3"/>
  </g>


  <!-- ===== left toolbar ===== -->
  <path d="M19.3 58.5 L19.8 71 L23 68.2 L26.6 74.6 L30 73 L26.5 66.8 L30.8 65.2 Z" fill="none" stroke="#3b5de7" stroke-width="1.1" stroke-linejoin="round"/>
  <g fill="none" stroke="#d1d4dc" stroke-width="1.2">
    <circle cx="17.4" cy="110.3" r="2.2"/><circle cx="34.6" cy="93.3" r="2.2"/>
    <path d="M19 108.7 L33 94.9"/>
    <!-- fib -->
    <path d="M14 128.5 H37 M14 134.3 H32.5 M14 140.5 H32.5 M18.5 146.5 H37"/>
    <circle cx="34.6" cy="134.3" r="2.1"/><circle cx="16" cy="146.5" r="2.1"/>
    <!-- brush -->
    <path d="M14.5 182.5 H23 Q27 178 25.5 174 L22.5 171.5 Q16 174 14.5 182.5 Z"/>
    <path d="M24 170.5 Q26 166.5 29 168.5 Q30.5 171 33 169.5 L37.5 166"/>
    <!-- T -->
    <path d="M20.5 204.5 V201 H33 V204.5 M26.8 201 V219.5 M23.8 219.5 H29.8"/>
    <!-- pattern -->
    <circle cx="20.2" cy="237.6" r="2"/><circle cx="33.2" cy="238.5" r="2"/><circle cx="24.9" cy="244.6" r="2"/><circle cx="17.6" cy="254" r="2"/><circle cx="35.6" cy="251.8" r="2"/>
    <path d="M19.8 239.6 L18 252 M21.8 239 L23.6 243 M26.8 243.8 L31.5 239.6 M26.3 246.2 L34 250.4 M33.8 240.5 L35.2 249.8 M23.8 246.3 L18.8 252.3"/>
    <!-- forecast -->
    <circle cx="16.4" cy="274.2" r="2"/><circle cx="16.4" cy="284.4" r="2"/><circle cx="35" cy="284.4" r="2"/><circle cx="16.4" cy="290.4" r="2"/>
    <path d="M18.4 274.2 H36.5 M18.4 284.4 H33 M18.4 290.4 H36.5"/>
    <path d="M21.5 281.5 L23 281 M25.5 280 L27 279.5 M29.5 278.5 L31 278 M33 277 L34.5 276.5" stroke-width="1"/>
    <!-- smiley -->
    <circle cx="26.1" cy="318.1" r="10.6"/>
    <path d="M21.8 320.5 Q26.1 324.5 30.4 320.5"/>
  </g>
  <circle cx="22.6" cy="315.2" r="1" fill="#d1d4dc"/><circle cx="29.6" cy="315.2" r="1" fill="#d1d4dc"/>
  <rect x="8.3" y="342" width="35.6" height="1" fill="#434651"/>
  <g fill="none" stroke="#d1d4dc" stroke-width="1.2">
    <!-- ruler -->
    <path d="M14.2 372 L34.8 355.4 L38.6 360.6 L18 377.2 Z"/>
    <path d="M19 368.2 L20.8 370.5 M22.6 365.3 L24 367.2 M26.2 362.4 L28 364.7 M29.8 359.5 L31.2 361.4 M33.4 356.6 L35.2 358.9" stroke-width="1"/>
    <!-- zoom -->
    <circle cx="24.4" cy="401.6" r="7.6"/>
    <path d="M29.8 407 L34.4 411.6 M20.4 401.6 H28.4 M24.4 397.6 V405.6"/>
  </g>
  <rect x="8.3" y="427" width="35.6" height="1" fill="#434651"/>
  <g fill="none" stroke="#d1d4dc" stroke-width="1.2">
    <!-- magnet -->
    <path d="M18 460.5 V450 A8.2 8.2 0 0 1 34.4 450 V460.5 H28.8 V450 A2.6 2.6 0 0 0 23.6 450 V460.5 Z"/>
    <path d="M18 456.5 H23.6 M28.8 456.5 H34.4"/>
    <!-- pencil -->
    <path d="M15.2 492 L16 487.5 L28.5 475.8 L31.8 479 L19.5 490.8 Z M26.5 477.7 L29.8 481"/>
    <rect x="26.8" y="490.6" width="9.8" height="7.2"/>
    <path d="M29 490.6 V488 A2.5 2.5 0 0 1 34 488"/>
    <!-- lock -->
    <rect x="18.3" y="522.6" width="15.6" height="10.6" rx="1"/>
    <path d="M21.2 522.6 V518.8 A4.6 4.6 0 0 1 30.2 517.5"/>
    <!-- eye -->
    <path d="M15.6 555.7 Q24.7 545.5 33.8 555.7 Q24.7 565.9 15.6 555.7 Z"/>
    <circle cx="24.7" cy="555.7" r="3"/>
  </g>
  <rect x="25.8" y="525.8" width="1" height="3.4" fill="#d1d4dc"/>
  <path d="M26.5 568.5 Q29.5 564.8 33 565.5 L35.5 563 Q33.8 568.5 29.5 569 Z" fill="none" stroke="#d1d4dc" stroke-width="1"/>
  <rect x="10.8" y="581" width="30.2" height="29.8" rx="4" fill="#2962ff"/>
  <g fill="none" stroke="#b9cdfb" stroke-width="1.2">
    <path d="M21.92 593.97 L18.38 597.5 A4 4 0 0 0 24.04 603.16 L27.58 599.63"/>
    <path d="M24.04 591.85 L27.58 588.31 A4 4 0 0 1 33.23 593.97 L29.7 597.5"/>
    <path d="M23.33 598.21 L28.28 593.26"/>
  </g>
  <rect x="8.3" y="620" width="35.6" height="1" fill="#434651"/>


  <!-- ===== right toolbar ===== -->
  <g fill="none" stroke="#d1d4dc" stroke-width="1.2">
    <rect x="970.6" y="54.3" width="23.2" height="22.2" rx="3.5"/>
    <path d="M975 59.6 H989.5 M975 63.5 H989.5 M975 67.5 H989.5 M975 71.5 H989.5"/>
    <!-- alarm -->
    <circle cx="982.5" cy="111.5" r="9.7"/>
    <path d="M973.6 106.5 A4.8 4.8 0 0 1 979.5 100.6 Z M985.5 100.6 A4.8 4.8 0 0 1 991.4 106.5 Z"/>
    <path d="M982.5 105 V112.3 H977"/>
    <path d="M975 119 L972.8 121.5 M990 119 L992.2 121.5"/>
    <!-- plus list -->
    <path d="M967 148.4 H976 M971.5 144 V152.8"/>
    <path d="M978 146.8 H991.5 Q993.8 146.8 993.8 149 V167.3 Q993.8 169.5 991.5 169.5 H972.3 Q970 169.5 970 167.3 V154.5"/>
    <rect x="975" y="153.2" width="14.5" height="3.6" rx="1.8"/>
    <path d="M975 160.4 H989.5 M975 164.2 H989.5"/>
    <!-- flame -->
    <path d="M981 191 Q979 198 973.5 203 Q970 208 972.5 212.5 Q975.5 216.5 982 216.5 Q989 216.5 992 212 Q995 206.5 991 200.5 Q989.5 204 987.5 204.5 Q988 196 981 191 Z"/>
    <path d="M978.5 216 Q977.5 211 982 207.5 Q986 211 985.5 216"/>
    <!-- calendar -->
    <rect x="970.3" y="239" width="23.4" height="23" rx="3"/>
    <path d="M976.5 236.5 V241 M987.5 236.5 V241"/>
    <circle cx="975.8" cy="244.7" r="1.5"/><circle cx="981.8" cy="244.7" r="1.5"/><circle cx="988" cy="244.7" r="1.5"/>
    <circle cx="975.8" cy="250.9" r="1.5"/><circle cx="981.8" cy="250.9" r="1.5"/><circle cx="988" cy="250.9" r="1.5"/>
    <circle cx="975.8" cy="256.9" r="1.5"/><circle cx="981.8" cy="256.9" r="1.5"/>
    <!-- bulb -->
    <path d="M977.5 299.5 A9.3 9.3 0 1 1 987 299.5 V301.5 H977.5 Z"/>
    <path d="M979.5 288 H985 M982.2 288 V301.5 M977.8 304.3 H986.6 M979.5 307.2 H985"/>
  </g>
  <rect x="965" y="323.5" width="33" height="1" fill="#434651"/>
  <g fill="none" stroke="#d1d4dc" stroke-width="1.2">
    <!-- cloud -->
    <path d="M973 362.5 Q967 362 967.2 355.5 Q967.5 350.5 972 349 Q972.5 341 980 340.5 Q985 339.5 988.5 344 Q995 343.5 997 350 Q998.5 356 994 359.5 Q991 362.8 986 362.5 Z"/>
    <path d="M975 350.7 H989 M975 354.5 H984"/>
    <circle cx="991.6" cy="364.8" r="2"/>
    <!-- chat -->
    <path d="M970.3 404.8 V388 Q970.3 385.3 973 385.3 H987.5 Q990.2 385.3 990.2 388 V401.2 Q990.2 404 987.5 404 H975 Z"/>
    <path d="M990.2 394 Q993.9 394 993.9 397 V408.3 L990 405.5 H982 Q979.5 405.5 979.5 404"/>
    <path d="M975 391.5 H986 M975 395.5 H983"/>
    <!-- bulb waves -->
    <path d="M977.7 447 A9 9 0 1 1 986.7 447 V448.5 H977.7 Z"/>
    <path d="M979.5 436 H985 M982.2 436 V448.5 M977.8 451.5 H986.6 M979.5 454.5 H985"/>
    <path d="M970.5 432 Q967 439.5 970.5 447 M967.5 430 Q963.5 439.5 967.5 449 M994 432 Q997.5 439.5 994 447 M997 430 Q1001 439.5 997 449"/>
    <!-- broadcast -->
    <path d="M980 482.5 L986 486.9 L980 491.3 Z"/>
    <path d="M975.5 478.5 Q970.5 486.9 975.5 495.3 M988.9 478.5 Q993.9 486.9 988.9 495.3"/>
    <path d="M971 473.5 Q963.5 486.9 971 500.3 M993.4 473.5 Q1000.9 486.9 993.4 500.3"/>
    <!-- bell -->
    <path d="M975 539 V528 Q975 521 982.8 520.8 Q990.6 521 990.6 528 V539"/>
    <path d="M972.3 539.2 H993.3 Q994 541.5 992.5 541.5 H973.3 Q971.5 541.5 972.3 539.2 Z"/>
    <path d="M980 541.5 Q982.8 545.5 985.6 541.5"/>
  </g>
  <rect x="965" y="561" width="33" height="1" fill="#434651"/>
  <path d="M977 576 H1004 V621 H977 A22.5 22.5 0 0 1 977 576 Z" fill="#f7f8fa"/>
  <g>
    <path d="M980.5 588.5 Q974.5 587.5 972.5 592.5 Q969.5 594.5 971 599 Q970 603.5 974 605.5 Q976 609 980.5 607.5 Z" fill="#c85ad8"/>
    <path d="M983 588.5 Q989 587.5 991 592.5 Q994 594.5 992.5 599 Q993.5 603.5 989.5 605.5 Q987.5 609 983 607.5 Z" fill="#7a6cf0"/>
    <path d="M971 599 Q970 603.5 974 605.5 Q976 609 980.5 607.5 V598 Z" fill="#f06a8a"/>
    <path d="M992.5 599 Q993.5 603.5 989.5 605.5 Q987.5 609 983 607.5 V598 Z" fill="#5aa0f5"/>
    <path d="M974 594 H978 M976 598 L979 600.5 M985 593 L988 595.5 M987.5 600 L985.5 603" stroke="#f7f8fa" stroke-width="0.9" fill="none"/>
  </g>


  <!-- ===== date range bar ===== -->
  <g font-size="13" font-weight="bold" fill="#d1d4dc">
    <text x="70.3" y="575.5" textLength="16" lengthAdjust="spacingAndGlyphs">1D</text>
    <text x="98" y="575.5" textLength="16" lengthAdjust="spacingAndGlyphs">5D</text>
    <text x="126" y="575.5" textLength="17.6" lengthAdjust="spacingAndGlyphs">1M</text>
    <text x="155.4" y="575.5" textLength="17.6" lengthAdjust="spacingAndGlyphs">3M</text>
    <text x="184.4" y="575.5" textLength="17.6" lengthAdjust="spacingAndGlyphs">6M</text>
    <text x="213.8" y="575.5" textLength="24.5" lengthAdjust="spacingAndGlyphs">YTD</text>
    <text x="251" y="575.5" textLength="14.7" lengthAdjust="spacingAndGlyphs">1Y</text>
    <text x="278" y="575.5" textLength="15.4" lengthAdjust="spacingAndGlyphs">5Y</text>
    <text x="304.6" y="575.5" textLength="16.6" lengthAdjust="spacingAndGlyphs">All</text>
    <text x="744" y="575.5" textLength="93.4" lengthAdjust="spacingAndGlyphs">14:48:16 (UTC)</text>
    <text x="859.6" y="575.5" textLength="13.2" lengthAdjust="spacingAndGlyphs" font-weight="normal">%</text>
    <text x="885.7" y="575.5" textLength="18.1" lengthAdjust="spacingAndGlyphs">log</text>
    <text x="916.7" y="575.5" textLength="27.3" lengthAdjust="spacingAndGlyphs" fill="#2962ff">auto</text>
  </g>
  <rect x="332" y="560" width="1" height="21" fill="#434651"/>
  <rect x="848.5" y="560" width="1" height="21" fill="#434651"/>
  <g fill="none" stroke="#d1d4dc" stroke-width="1.2">
    <path d="M350 566 V562 Q350 560.6 351.4 560.6 H363.6 Q365 560.6 365 562 V576.5 Q365 578 363.6 578 H353"/>
    <path d="M350 565.5 H365 M354 558 V562.5 M361 558 V562.5"/>
    <path d="M346.5 573 H355 M352.5 570.5 L355 573 L352.5 575.5"/>
  </g>
  <!-- ===== bottom panel ===== -->
  <g font-size="14" fill="#d1d4dc" stroke="#d1d4dc" stroke-width="0.3">
    <text x="71.7" y="617.4" textLength="92.8" lengthAdjust="spacingAndGlyphs">Stock Screener</text>
    <text x="210.4" y="617.4" textLength="67.7" lengthAdjust="spacingAndGlyphs">Pine Editor</text>
    <text x="310.5" y="617.4" textLength="94" lengthAdjust="spacingAndGlyphs">Strategy Tester</text>
    <text x="437.7" y="617.4" textLength="83" lengthAdjust="spacingAndGlyphs">Trading Panel</text>
  </g>
  <g fill="none" stroke="#d1d4dc" stroke-width="1.2">
    <path d="M177.5 610 L181 613.3 L184.5 610"/>
    <path d="M890 615.5 L899.5 606.5 L909 615.5"/>
    <path d="M926.5 608 V605.5 Q926.5 603.5 928.5 603.5 H931 M938.5 603.5 H941 Q943 603.5 943 605.5 V608 M943 614 V616.5 Q943 618.5 941 618.5 H938.5 M931 618.5 H928.5 Q926.5 618.5 926.5 616.5 V614"/>
  </g>


  <circle cx="982" cy="627" r="2" fill="none" stroke="#d1d4dc" stroke-width="1"/>
  <rect x="986.5" y="625" width="7.5" height="4" rx="2" fill="none" stroke="#d1d4dc" stroke-width="1"/>
  <path d="M998 632 L1004 624 V632 Z" fill="#1f4fb8"/>
  <path d="M0 626 L5 632 H0 Z" fill="#1f4fb8"/>

  <!-- ===== legend ===== -->
  <defs><clipPath id="usf"><circle cx="77.2" cy="54.4" r="6"/></clipPath><clipPath id="auf"><circle cx="71" cy="60.7" r="6.5"/></clipPath></defs>
  <g clip-path="url(#usf)">
    <rect x="70" y="47" width="14" height="15" fill="#eceef3"/>
    <rect x="70" y="49" width="14" height="1.3" fill="#d9475a"/><rect x="70" y="51.6" width="14" height="1.3" fill="#d9475a"/><rect x="70" y="54.2" width="14" height="1.3" fill="#d9475a"/><rect x="70" y="56.8" width="14" height="1.3" fill="#d9475a"/><rect x="70" y="59.4" width="14" height="1.3" fill="#d9475a"/>
    <rect x="70" y="47" width="7.5" height="7" fill="#5a7fd8"/>
  </g>
  <circle cx="71" cy="60.7" r="7.3" fill="#131722"/>
  <g clip-path="url(#auf)">
    <rect x="64" y="54" width="14" height="14" fill="#2447a6"/>
    <rect x="64" y="54" width="7" height="6" fill="#9aa6d6"/>
    <path d="M64 56.8 H71 M67.5 54 V60" stroke="#e45a6a" stroke-width="1.2"/>
    <circle cx="68" cy="64" r="0.9" fill="#fff"/><circle cx="74" cy="58.5" r="0.7" fill="#fff"/><circle cx="75.5" cy="62" r="0.7" fill="#fff"/><circle cx="73" cy="65" r="0.7" fill="#fff"/>
  </g>
  <g font-size="15" fill="#686b76">
  <text x="87" y="64" textLength="213" lengthAdjust="spacingAndGlyphs">Australian Dollar / U.S. Dollar</text>
  <text x="314.9" y="64" textLength="16.1" lengthAdjust="spacingAndGlyphs">1D</text>
  <text x="344.2" y="64" textLength="37.4" lengthAdjust="spacingAndGlyphs">FXCM</text>
  </g>
  <circle cx="307.4" cy="59" r="1.3" fill="#686b76"/><circle cx="337.8" cy="59" r="1.3" fill="#686b76"/>
  <text x="396.5" y="64" font-size="12.5" fill="#4ca154" textLength="104.5" lengthAdjust="spacingAndGlyphs">+0.00361 (+0.53%)</text>
  <rect x="61" y="70" width="92" height="48" rx="3" fill="#131722" fill-opacity="0.5"/>
  <text x="65.5" y="87" font-size="12.5" fill="#6b6e79" textLength="23" lengthAdjust="spacingAndGlyphs">EMA</text>
  <text x="102.8" y="87" font-size="13" fill="#d8475a" textLength="45.8" lengthAdjust="spacingAndGlyphs">0.66665</text>
  <text x="65.5" y="111" font-size="12.5" fill="#6b6e79" textLength="23" lengthAdjust="spacingAndGlyphs">EMA</text>
  <text x="102.8" y="111" font-size="13" fill="#a9acb5" textLength="45.8" lengthAdjust="spacingAndGlyphs">0.67549</text>
  <rect x="65.5" y="120.5" width="28" height="20" rx="3" fill="#131722" stroke="#2f3340" stroke-width="1"/>
  <path d="M75.5 132.5 L79.5 128.5 L83.5 132.5" fill="none" stroke="#d1d4dc" stroke-width="1.5"/>

  <!-- ===== price axis ===== -->
  <text x="900.6" y="58.7" font-size="11" fill="#5d606b" textLength="19.6" lengthAdjust="spacingAndGlyphs">USD</text>
  <path d="M923.5 53.5 L926.2 56.2 L928.9 53.5" fill="none" stroke="#5d606b" stroke-width="1.1"/>
  <g font-size="12" fill="#5a5d67">
    <text x="898" y="78">0.72000</text>
    <text x="898" y="117.7">0.71000</text>
    <text x="898" y="157.4">0.70000</text>
    <text x="898" y="197.1">0.69000</text>
    <text x="898" y="276.5">0.67000</text>
    <text x="898" y="355.9">0.65000</text>
    <text x="898" y="435.3">0.63000</text>
    <text x="898" y="475">0.62000</text>
    <text x="898" y="514.7">0.61000</text>
  </g>
  <rect x="891" y="213.3" width="55" height="16.6" rx="2" fill="#22bad2"/>
  <text x="898" y="226" font-size="12" fill="#131722">0.68000</text>
  <rect x="891" y="230.5" width="58.5" height="30.4" rx="2.5" fill="#4caf50"/>
  <text x="898" y="242.7" font-size="12" font-weight="bold" fill="#fff">0.67860</text>
  <text x="898" y="256.7" font-size="12" font-weight="bold" fill="#fff">06:11:44</text>
  <rect x="891" y="304.5" width="55" height="16.3" rx="2" fill="#22bad2"/>
  <text x="898" y="317" font-size="12" fill="#131722">0.66000</text>
  <rect x="891" y="383" width="55" height="16.7" rx="2" fill="#9575cd"/>
  <text x="898" y="396" font-size="12" fill="#fff">0.64000</text>

  <!-- ===== time axis ===== -->
  <g font-size="11.5" fill="#5f626c" text-anchor="middle">
    <text x="90.6" y="540">Sep</text>
    <text x="173" y="540">Oct</text>
    <text x="334" y="540">Dec</text>
    <text x="416.3" y="540" font-weight="bold">2023</text>
    <text x="498.5" y="540">Feb</text>
    <text x="659.4" y="540">Apr</text>
    <text x="820.8" y="540">Jun</text>
  </g>
  <path d="M918.5 530.5 L926.5 530.5 L930 536 L926.5 541.5 L918.5 541.5 L915 536 Z" fill="none" stroke="#d1d4dc" stroke-width="1.2"/>
  <circle cx="922.7" cy="536" r="2" fill="none" stroke="#d1d4dc" stroke-width="1.2"/>

  <!-- tradingview logo -->
  <g fill="#dfe0e6" stroke="#131722" stroke-width="2.4" stroke-linejoin="round" paint-order="stroke">
    <path d="M67.8 493.1 H79.9 V507.8 H74 V498.8 H67.8 Z"/>
    <circle cx="84.9" cy="495.9" r="3"/>
    <path d="M90.8 493.1 H98 L92.3 507.8 H85.2 Z"/>
  </g>
  <!-- lightning circle -->
  <circle cx="851.4" cy="509.2" r="11.2" fill="#1a1424"/><circle cx="851.4" cy="509.2" r="9.6" fill="none" stroke="#b46dd8" stroke-width="1.4"/>
  <path d="M854.5 503.5 L848 510.5 L852 510.5 L849 515.5 L855.5 508 L851.5 508 Z" fill="#b862e0"/>
</svg>
</body></html>
